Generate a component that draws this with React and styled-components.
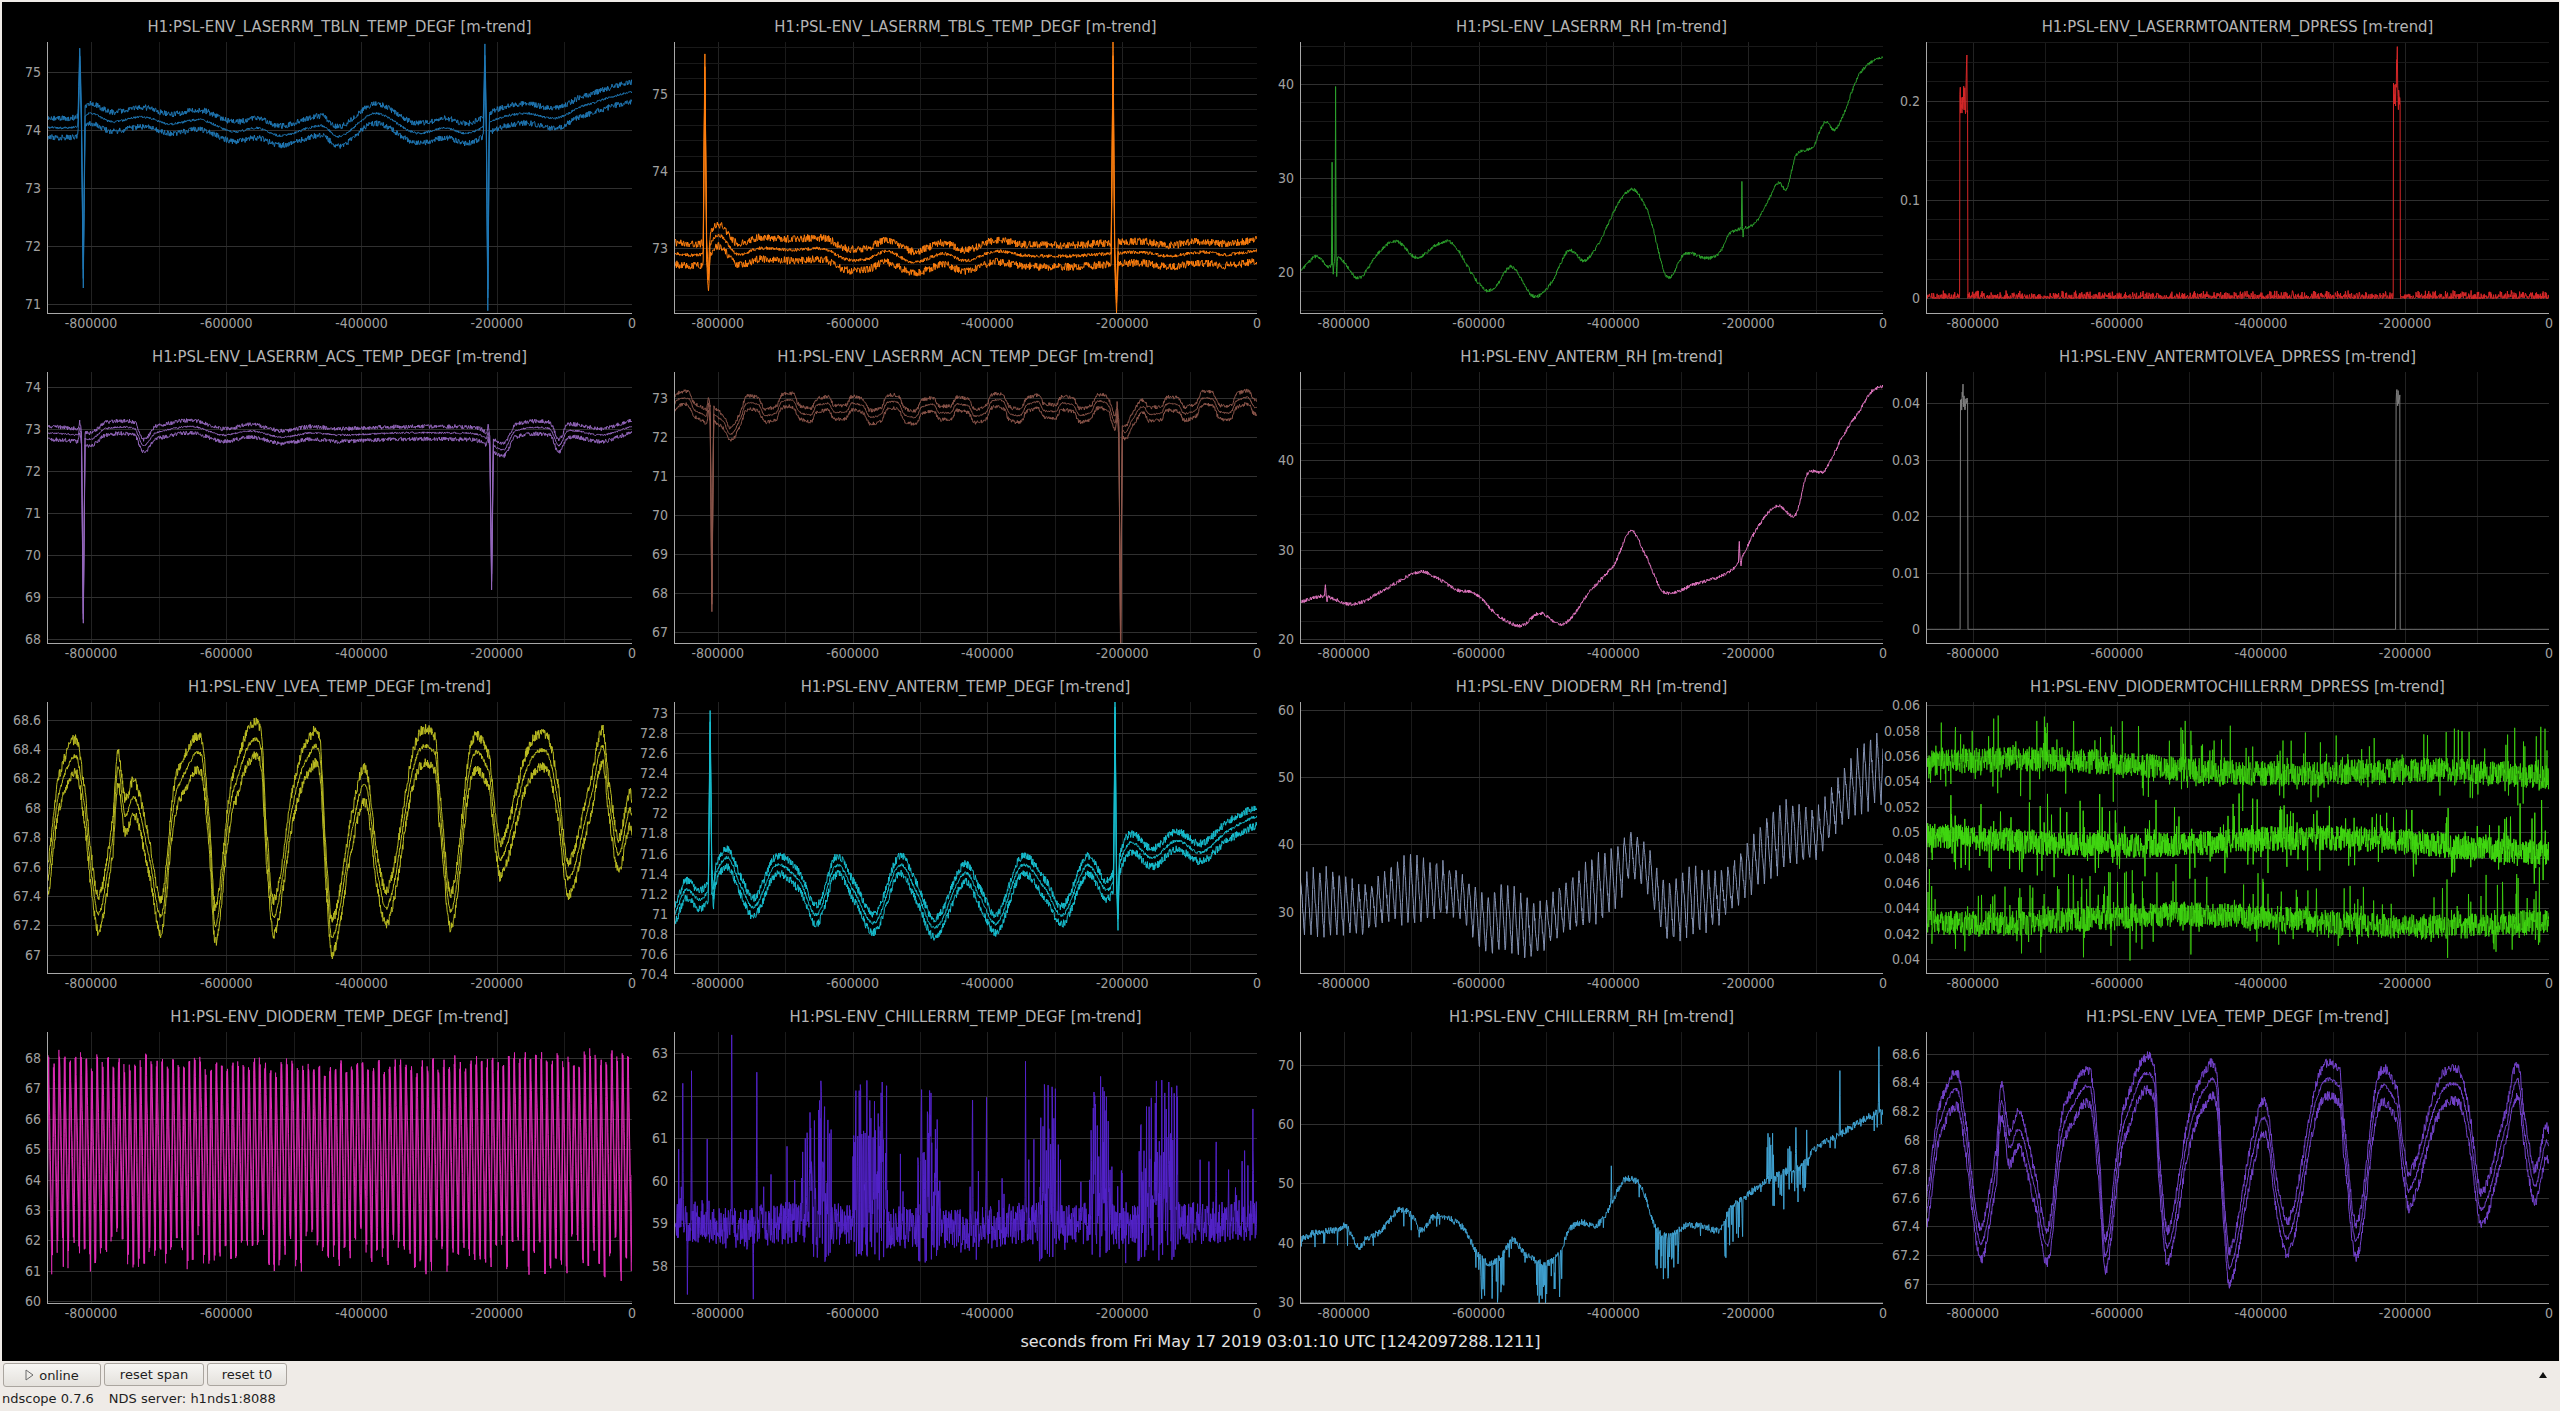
import React, { useMemo } from 'react'
import styled, { createGlobalStyle } from 'styled-components'

const GlobalStyle = createGlobalStyle`
  html, body { margin: 0; padding: 0; background: #efebe7; overflow: hidden; }
  body { font-family: "DejaVu Sans Condensed", "DejaVu Sans", sans-serif; font-stretch: condensed; }
`

const Window = styled.div`
  width: 2560px;
  height: 1411px;
  box-sizing: border-box;
  padding: 2px 1px 0 2px;
  display: flex;
  flex-direction: column;
  background: #efebe7;
`
const Scope = styled.div`
  height: 1359px;
  background: #000;
  display: flex;
  flex-direction: column;
`
const PlotGrid = styled.div`
  display: grid;
  grid-template-columns: 640px 625px 626px 666px;
  grid-template-rows: repeat(4, 330px);
`
const Cell = styled.div`
  display: grid;
  grid-template-columns: ${p => p.$axis}px ${p => p.$plot}px;
  grid-template-rows: 40px 272px 18px;
`
const Title = styled.div`
  grid-column: 2;
  grid-row: 1;
  align-self: end;
  padding-bottom: 5px;
  text-align: center;
  white-space: nowrap;
  color: #b4b4b4;
  font-size: 16.5px;
  line-height: 20px;
`
const YAxis = styled.div`
  grid-column: 1;
  grid-row: 2;
  position: relative;
`
const YLabel = styled.span`
  position: absolute;
  right: 6px;
  transform: translateY(-50%);
  color: #a0a0a0;
  font-size: 14px;
  line-height: 16px;
  white-space: nowrap;
`
const PlotArea = styled.svg`
  grid-column: 2;
  grid-row: 2;
  display: block;
  overflow: hidden;
`
const XAxis = styled.div`
  grid-column: 2;
  grid-row: 3;
  position: relative;
`
const XLabel = styled.span`
  position: absolute;
  top: 0;
  transform: translateX(-50%);
  color: #a0a0a0;
  font-size: 14px;
  line-height: 18px;
  white-space: nowrap;
`
const TimeLabel = styled.div`
  height: 39px;
  display: flex;
  align-items: center;
  justify-content: center;
  color: #e2e2e2;
  font-family: "DejaVu Sans", sans-serif;
  font-stretch: normal;
  font-size: 16px;
`
const Panel = styled.div`
  flex: 1;
  display: flex;
  flex-direction: column;
  padding-top: 2px;
  font-family: "DejaVu Sans", sans-serif;
  font-stretch: normal;
`
const ButtonRow = styled.div`
  height: 24px;
  display: flex;
  align-items: stretch;
  gap: 3px;
  padding-left: 1px;
`
const Button = styled.button`
  width: ${p => p.$w}px;
  height: ${p => (p.$tall ? 24 : 23)}px;
  box-sizing: border-box;
  display: flex;
  align-items: center;
  justify-content: center;
  gap: 5px;
  padding: 0;
  border: 1px solid #aaa59f;
  border-radius: 3px;
  background: linear-gradient(#f7f6f4, #e4e1dc);
  color: #1e1e1e;
  font-family: inherit;
  font-size: 13px;
`
const Collapse = styled.div`
  margin-left: auto;
  margin-right: 12px;
  display: flex;
  align-items: center;
`
const Status = styled.div`
  display: flex;
  gap: 15px;
  color: #1e1e1e;
  font-size: 13px;
  line-height: 24px;
`

// ---- data helpers ----
const rng = seed => {
  let a = seed >>> 0
  return () => {
    a = (a + 0x6d2b79f5) >>> 0
    let t = a
    t = Math.imul(t ^ (t >>> 15), t | 1)
    t ^= t + Math.imul(t ^ (t >>> 7), t | 61)
    return ((t ^ (t >>> 14)) >>> 0) / 4294967296
  }
}

const curve = (keys, t) => {
  const n = keys.length
  if (t <= keys[0][0]) return keys[0][1]
  if (t >= keys[n - 1][0]) return keys[n - 1][1]
  let i = 1
  while (keys[i][0] < t) i++
  const p0 = keys[Math.max(0, i - 2)][1]
  const p1 = keys[i - 1][1]
  const p2 = keys[i][1]
  const p3 = keys[Math.min(n - 1, i + 1)][1]
  const u = (t - keys[i - 1][0]) / (keys[i][0] - keys[i - 1][0])
  return 0.5 * (2 * p1 + (-p0 + p2) * u + (2 * p0 - 5 * p1 + 4 * p2 - p3) * u * u + (-p0 + 3 * p1 - 3 * p2 + p3) * u * u * u)
}

const grid = (n, spikes = []) => {
  const ts = []
  for (let i = 0; i < n; i++) ts.push(i / (n - 1))
  spikes.forEach(s => {
    const w = s.w || 0.004
    ts.push(s.t - w / 2, s.t, s.t + w / 2)
  })
  return ts.sort((a, b) => a - b)
}

const spikeAt = (list = [], t) => {
  let s = 0
  list.forEach(k => {
    const w = k.w || 0.004
    const d = t - k.t
    if (d <= 0 && d > -w) s += (k.up || 0) * Math.max(0, 1 - Math.abs(d + w / 2) / (w / 2))
    if (d > 0 && d < w) s += (k.down || 0) * Math.max(0, 1 - Math.abs(d - w / 2) / (w / 2))
  })
  return s
}

const band = o => r => {
  const ts = grid(o.n || 1200, o.spikes)
  const lo = [], mid = [], hi = []
  ts.forEach(t => {
    const b = curve(o.keys, t) + (o.wave ? o.wave(t) : 0) + spikeAt(o.spikes, t)
    mid.push(b + (r() - 0.5) * 2 * o.meanNoise)
    lo.push(b - o.spread + (r() - 0.5) * 2 * o.noise)
    hi.push(b + o.spread + (r() - 0.5) * 2 * o.noise)
  })
  return [{ ts, vs: lo }, { ts, vs: mid }, { ts, vs: hi }]
}

const single = o => r => {
  const ts = grid(o.n || 1200, o.spikes)
  const vs = ts.map(t => curve(o.keys, t) + spikeAt(o.spikes, t) + (r() - 0.5) * 2 * (o.noise || 0) + (o.extra ? o.extra(t, r) : 0))
  return [{ ts, vs }]
}

const inside = (t, list) => list.findIndex(([a, b]) => t >= a && t <= b)

const LVEA = [[0, 67.48], [0.019, 68.08], [0.05, 68.35], [0.065, 67.99], [0.075, 67.58], [0.089, 67.28], [0.113, 67.81], [0.121, 68.27], [0.133, 67.95], [0.15, 68.07], [0.175, 67.66], [0.196, 67.27], [0.216, 67.99], [0.23, 68.2], [0.264, 68.36], [0.278, 67.8], [0.288, 67.2], [0.312, 67.97], [0.326, 68.21], [0.347, 68.44], [0.367, 68.39], [0.374, 67.8], [0.388, 67.26], [0.422, 68.05], [0.45, 68.37], [0.467, 68.34], [0.477, 67.58], [0.488, 67.12], [0.525, 67.91], [0.546, 68.14], [0.564, 67.58], [0.584, 67.35], [0.629, 68.31], [0.664, 68.37], [0.67, 68.03], [0.691, 67.3], [0.725, 68.31], [0.756, 68.24], [0.767, 67.83], [0.777, 67.66], [0.822, 68.28], [0.856, 68.37], [0.874, 68.03], [0.891, 67.52], [0.932, 68.1], [0.95, 68.42], [0.96, 68.07], [0.977, 67.68], [0.995, 67.98], [1, 67.95]]

const lveaBand = band({ keys: LVEA, spread: 0.115, noise: 0.035, meanNoise: 0.014, n: 1500 })

const PLOTS = [
  {
    title: 'H1:PSL-ENV_LASERRM_TBLN_TEMP_DEGF [m-trend]', color: '#1f77b4', y: [70.83, 75.51], major: 1,
    gen: band({
      keys: [[0, 74.04], [0.05, 74.05], [0.072, 74.28], [0.11, 74.14], [0.164, 74.22], [0.21, 74.1], [0.263, 74.17], [0.317, 73.97], [0.36, 74.03], [0.4, 73.9], [0.469, 74.07], [0.5, 73.89], [0.561, 74.28], [0.629, 73.95], [0.683, 74.03], [0.72, 73.94], [0.774, 74.2], [0.82, 74.28], [0.87, 74.2], [0.912, 74.4], [1, 74.65]],
      spread: 0.167, noise: 0.05, meanNoise: 0.02,
      spikes: [{ t: 0.059, up: 1.15, down: -2.75, w: 0.006 }, { t: 0.751, up: 1.2, down: -3.0, w: 0.005 }],
    }),
  },
  {
    title: 'H1:PSL-ENV_LASERRM_TBLS_TEMP_DEGF [m-trend]', color: '#ff7f0e', y: [72.15, 75.67], major: 1, minor: 0.2,
    gen: band({
      keys: [[0, 72.93], [0.05, 72.93], [0.076, 73.17], [0.107, 72.93], [0.147, 73.0], [0.2, 72.98], [0.26, 72.99], [0.294, 72.86], [0.33, 72.86], [0.365, 72.96], [0.411, 72.82], [0.462, 72.93], [0.5, 72.84], [0.55, 72.96], [0.6, 72.91], [0.68, 72.9], [0.745, 72.93], [0.8, 72.95], [0.85, 72.9], [0.9, 72.95], [0.95, 72.92], [1, 72.97]],
      spread: 0.14, noise: 0.05, meanNoise: 0.022,
      spikes: [{ t: 0.056, up: 2.4, down: -0.45, w: 0.006 }, { t: 0.756, up: 2.55, down: -0.65, w: 0.006 }],
    }),
  },
  {
    title: 'H1:PSL-ENV_LASERRM_RH [m-trend]', color: '#2ca02c', y: [15.6, 44.4], major: 10, minor: 2,
    gen: single({
      keys: [[0, 20.2], [0.028, 21.7], [0.05, 20.6], [0.068, 21.5], [0.1, 19.4], [0.137, 22.2], [0.165, 23.3], [0.2, 21.6], [0.24, 23.1], [0.263, 22.9], [0.309, 18.7], [0.332, 18.3], [0.363, 20.6], [0.4, 17.5], [0.431, 18.9], [0.46, 22.3], [0.494, 21.5], [0.563, 28.6], [0.597, 26.4], [0.629, 19.6], [0.66, 22.0], [0.697, 21.5], [0.72, 22.1], [0.737, 24.1], [0.754, 24.6], [0.78, 25.2], [0.8, 27.2], [0.82, 29.5], [0.835, 28.9], [0.85, 32.4], [0.88, 33.3], [0.9, 35.9], [0.92, 35.3], [0.96, 41], [1, 42.8]],
      noise: 0.18, n: 1300,
      spikes: [{ t: 0.056, up: 11, down: -1, w: 0.002 }, { t: 0.062, up: 18.5, down: -2, w: 0.002 }, { t: 0.759, up: 5, down: -0.8, w: 0.002 }],
    }),
  },
  {
    title: 'H1:PSL-ENV_LASERRMTOANTERM_DPRESS [m-trend]', color: '#d62728', y: [-0.016, 0.26], major: 0.1, minor: 0.02,
    gen: single({
      keys: [[0, 0.001], [1, 0.001]], n: 1800,
      extra: (t, r) => {
        const w = inside(t, [[0.054, 0.067], [0.75, 0.761]])
        if (w === 0) return 0.2 + (r() - 0.5) * 0.03 + (t > 0.064 && t < 0.066 ? 0.035 : 0)
        if (w === 1) return 0.205 + (r() - 0.5) * 0.03 + (t > 0.755 && t < 0.757 ? 0.035 : 0)
        return r() * r() * 0.009 - 0.0015
      },
    }),
  },
  {
    title: 'H1:PSL-ENV_LASERRM_ACS_TEMP_DEGF [m-trend]', color: '#9467bd', y: [67.88, 74.35], major: 1,
    gen: band({
      keys: [[0, 72.9], [0.05, 72.85], [0.075, 72.75], [0.1, 73.0], [0.15, 73.0], [0.165, 72.6], [0.185, 72.9], [0.25, 73.05], [0.3, 72.85], [0.35, 72.95], [0.4, 72.8], [0.45, 72.9], [0.5, 72.85], [0.6, 72.9], [0.7, 72.9], [0.74, 72.85], [0.78, 72.5], [0.8, 72.95], [0.86, 73.0], [0.875, 72.6], [0.89, 72.95], [0.95, 72.85], [1, 73.05]],
      spread: 0.15, noise: 0.05, meanNoise: 0.022,
      spikes: [{ t: 0.059, up: 0.2, down: -4.3, w: 0.006 }, { t: 0.757, up: 0.2, down: -3.3, w: 0.006 }],
    }),
  },
  {
    title: 'H1:PSL-ENV_LASERRM_ACN_TEMP_DEGF [m-trend]', color: '#8c564b', y: [66.7, 73.67], major: 1,
    gen: band({
      keys: [[0, 72.8], [0.05, 72.75], [0.08, 72.35], [0.1, 72.2], [0.12, 72.7], [0.2, 72.75], [0.4, 72.7], [0.6, 72.75], [0.74, 72.7], [0.78, 72.3], [0.8, 72.6], [0.85, 72.75], [1, 72.85]],
      wave: t => 0.15 * Math.tanh(2.5 * Math.sin((2 * Math.PI * t) / 0.06)) + 0.06 * Math.sin(t * 71),
      spread: 0.17, noise: 0.05, meanNoise: 0.022,
      spikes: [{ t: 0.062, up: 0.3, down: -4.9, w: 0.006 }, { t: 0.763, up: 0.4, down: -5.6, w: 0.006 }],
    }),
  },
  {
    title: 'H1:PSL-ENV_ANTERM_RH [m-trend]', color: '#e377c2', y: [19.45, 49.9], major: 10, minor: 2,
    gen: single({
      keys: [[0, 24.2], [0.04, 24.8], [0.093, 23.9], [0.149, 25.7], [0.204, 27.5], [0.23, 27], [0.27, 25.5], [0.3, 25.1], [0.34, 22.6], [0.38, 21.5], [0.41, 22.9], [0.453, 21.7], [0.497, 25.3], [0.54, 28.4], [0.567, 32.1], [0.59, 29.7], [0.623, 25.3], [0.68, 26.2], [0.72, 27], [0.75, 28.4], [0.79, 33], [0.82, 34.9], [0.85, 33.9], [0.87, 38.5], [0.9, 38.9], [0.93, 42.6], [0.96, 45.5], [0.98, 47.7], [1, 48.3]],
      noise: 0.2, n: 1300,
      spikes: [{ t: 0.045, up: 1.5, down: -0.5, w: 0.003 }, { t: 0.755, up: 2.2, down: -0.8, w: 0.003 }],
    }),
  },
  {
    title: 'H1:PSL-ENV_ANTERMTOLVEA_DPRESS [m-trend]', color: '#7f7f7f', y: [-0.0026, 0.0455], major: 0.01,
    gen: single({
      keys: [[0, 0], [1, 0]], n: 1500,
      extra: (t, r) => {
        const w = inside(t, [[0.055, 0.067], [0.754, 0.761]])
        if (w === 0) return 0.04 + (r() - 0.5) * 0.003 + (t > 0.058 && t < 0.06 ? 0.0025 : 0)
        if (w === 1) return 0.041 + (r() - 0.5) * 0.003
        return 0
      },
    }),
  },
  { title: 'H1:PSL-ENV_LVEA_TEMP_DEGF [m-trend]', color: '#bcbd22', y: [66.87, 68.72], major: 0.2, gen: lveaBand },
  {
    title: 'H1:PSL-ENV_ANTERM_TEMP_DEGF [m-trend]', color: '#17becf', y: [70.4, 73.11], major: 0.2,
    gen: band({
      keys: [[0, 70.99], [0.02, 71.24], [0.048, 71.15], [0.09, 71.56], [0.118, 71.24], [0.138, 71.07], [0.174, 71.48], [0.216, 71.32], [0.245, 70.99], [0.278, 71.48], [0.307, 71.24], [0.344, 70.91], [0.386, 71.48], [0.414, 71.24], [0.448, 70.86], [0.498, 71.4], [0.526, 71.15], [0.554, 70.91], [0.596, 71.48], [0.638, 71.24], [0.667, 70.99], [0.708, 71.48], [0.745, 71.24], [0.78, 71.7], [0.82, 71.56], [0.862, 71.73], [0.904, 71.61], [0.946, 71.81], [1, 71.97]],
      spread: 0.09, noise: 0.04, meanNoise: 0.016, n: 1400,
      spikes: [{ t: 0.065, up: 1.65, down: -0.2, w: 0.006 }, { t: 0.759, up: 1.7, down: -0.5, w: 0.005 }],
    }),
  },
  {
    title: 'H1:PSL-ENV_DIODERM_RH [m-trend]', color: '#8593b3', y: [20.7, 61.2], major: 10,
    gen: single({
      keys: [[0, 31.2], [0.07, 31.2], [0.105, 30.2], [0.157, 32.7], [0.209, 33.2], [0.268, 32.7], [0.32, 28.2], [0.35, 29.2], [0.402, 27.2], [0.44, 29.7], [0.485, 32.2], [0.544, 35.2], [0.566, 38.2], [0.596, 36.2], [0.626, 30.2], [0.67, 31.7], [0.722, 32.2], [0.767, 36.2], [0.811, 40.1], [0.84, 41.6], [0.885, 41.6], [0.915, 45.1], [0.959, 49.6], [1, 51.3]],
      n: 1800,
      extra: (t, r) => {
        const a = (t * 90 + 0.3) % 1
        const s = a < 0.35 ? -1 + (2 * a) / 0.35 : 1 - (2 * (a - 0.35)) / 0.65
        return (4.3 + 0.8 * Math.sin(t * 40)) * s + (r() - 0.5) * 1.2
      },
    }),
  },
  {
    title: 'H1:PSL-ENV_DIODERMTOCHILLERRM_DPRESS [m-trend]', color: '#40d810', y: [0.03884, 0.06026], major: 0.002,
    gen: r => [[0.0554, -0.0013], [0.0494, -0.0006], [0.0432, -0.0004]].map(([c, d], j) => {
      const ts = grid(2200)
      const vs = ts.map(t => {
        let v = c + d * t * t + 0.0004 * Math.sin(t * 9 + j * 2) + (r() - 0.5) * 0.002
        if (r() < 0.1) v += (r() - 0.42) * 0.006
        return v
      })
      return { ts, vs, opacity: j === 1 ? 1 : 0.8 }
    }),
  },
  {
    title: 'H1:PSL-ENV_DIODERM_TEMP_DEGF [m-trend]', color: '#e22cb8', y: [59.9, 68.86], major: 1,
    gen: r => {
      const cycles = 108
      const lo = [], hi = []
      for (let k = 0; k <= cycles; k++) {
        lo.push(60.7 + r() * 1.5)
        hi.push(67.8 + r() * 0.45)
      }
      return [0, 0.12].map(shift => {
        const ts = grid(cycles * 16)
        const vs = ts.map(t => {
          const c = t * cycles + shift
          const k = Math.min(cycles, Math.floor(c))
          const a = c - Math.floor(c)
          const s = a < 0.3 ? a / 0.3 : 1 - (a - 0.3) / 0.7
          return lo[k] + (hi[k] - lo[k]) * s + (r() - 0.5) * 0.3
        })
        return { ts, vs, opacity: shift ? 0.75 : 1 }
      })
    },
  },
  {
    title: 'H1:PSL-ENV_CHILLERRM_TEMP_DEGF [m-trend]', color: '#5222c8', y: [57.1, 63.5], major: 1,
    gen: single({
      keys: [[0, 59.1], [0.1, 58.9], [0.2, 59.0], [0.5, 58.85], [0.6, 59.0], [0.9, 59.0], [1, 59.1]],
      n: 1600,
      spikes: [{ t: 0.016, up: 3, w: 0.002 }, { t: 0.031, up: 3.2, w: 0.002 }, { t: 0.1, up: 2.8, w: 0.002 }, { t: 0.143, up: 3.4, w: 0.002 }, { t: 0.513, up: 3.4, w: 0.002 }, { t: 0.537, up: 2.9, w: 0.002 }, { t: 0.604, up: 3.4, w: 0.002 }, { t: 0.931, up: 1.6, w: 0.002 }, { t: 0.994, up: 2.2, w: 0.002 }, { t: 0.022, down: -1.5, w: 0.002 }, { t: 0.135, down: -1.3, w: 0.002 }],
      extra: (t, r) => {
        const b = inside(t, [[0.225, 0.27], [0.306, 0.366], [0.418, 0.455], [0.626, 0.656], [0.715, 0.749], [0.797, 0.864]])
        if (b >= 0) return r() < 0.5 ? 0.2 + r() * 3.3 : (r() - 0.5) * 1.8
        return (r() - 0.5) * 1.0 + (r() < 0.06 ? (r() - 0.3) * 2.4 : 0)
      },
    }),
  },
  {
    title: 'H1:PSL-ENV_CHILLERRM_RH [m-trend]', color: '#40a2d2', y: [29.7, 75.5], major: 10,
    gen: single({
      keys: [[0, 40.5], [0.022, 41.6], [0.067, 42.2], [0.078, 42.8], [0.1, 39.4], [0.111, 40.5], [0.141, 42.2], [0.171, 45.6], [0.193, 44.5], [0.208, 42.2], [0.23, 44.5], [0.26, 43.9], [0.282, 42.2], [0.305, 38.2], [0.327, 36.5], [0.349, 38.2], [0.364, 40.5], [0.386, 38.2], [0.409, 36.8], [0.423, 36.5], [0.446, 38.2], [0.461, 42.2], [0.483, 43.4], [0.505, 42.8], [0.527, 45.1], [0.55, 49.7], [0.565, 50.8], [0.587, 49.1], [0.609, 42.8], [0.632, 41.1], [0.661, 42.8], [0.691, 42.8], [0.721, 42.2], [0.736, 45.6], [0.766, 47.9], [0.795, 50.2], [0.825, 51.9], [0.854, 52.5], [0.884, 55.9], [0.914, 57.6], [0.944, 59.4], [0.973, 61.1], [1, 62.2]],
      noise: 0.6, n: 1400,
      spikes: [{ t: 0.927, up: 11, w: 0.002 }, { t: 0.994, up: 11, w: 0.002 }, { t: 0.535, up: 6, w: 0.002 }],
      extra: (t, r) => {
        const w = inside(t, [[0.3, 0.35], [0.4, 0.45], [0.61, 0.65], [0.725, 0.76], [0.8, 0.87]])
        if (w < 0) return r() < 0.03 ? -r() * 3 : 0
        if (r() < 0.3) return w === 4 ? (r() < 0.5 ? r() * 8 : -r() * 6) : -2 - r() * 5
        return 0
      },
    }),
  },
  { title: 'H1:PSL-ENV_LVEA_TEMP_DEGF [m-trend]', color: '#7443cc', y: [66.86, 68.75], major: 0.2, gen: lveaBand },
]

const COLS = [
  { axis: 45, plot: 585 },
  { axis: 32, plot: 583 },
  { axis: 33, plot: 583 },
  { axis: 33, plot: 623 },
]

const X_MIN = -865000
const X_MAJOR = [-800000, -600000, -400000, -200000, 0]
const X_MINOR = [-700000, -500000, -300000, -100000]
const H = 272

const ticksIn = (lo, hi, step) => {
  const out = []
  for (let k = Math.ceil(lo / step - 1e-9); k * step <= hi + 1e-12; k++) out.push(+(k * step).toFixed(6))
  return out
}

const crisp = v => Math.round(v) + 0.5

function Chart({ cfg, col, seed }) {
  const W = col.plot
  const series = useMemo(() => cfg.gen(rng(seed)), [cfg, seed])
  const [y0, y1] = cfg.y
  const sy = v => ((y1 - v) / (y1 - y0)) * H
  const sx = v => ((v - X_MIN) / -X_MIN) * W
  const major = ticksIn(y0, y1, cfg.major)
  const minor = cfg.minor ? ticksIn(y0, y1, cfg.minor).filter(v => !major.some(m => Math.abs(m - v) < 1e-9)) : []

  return (
    <Cell $axis={col.axis} $plot={W}>
      <Title>{cfg.title}</Title>
      <YAxis>
        {major.map(v => (
          <YLabel key={v} style={{ top: sy(v) }}>{String(v)}</YLabel>
        ))}
      </YAxis>
      <PlotArea width={W} height={H} viewBox={`0 0 ${W} ${H}`}>
        <g shapeRendering="crispEdges" strokeWidth="1">
          {X_MINOR.map(v => <line key={v} x1={crisp(sx(v))} x2={crisp(sx(v))} y1="0" y2={H} stroke="#1a1a1a" />)}
          {X_MAJOR.map(v => <line key={v} x1={crisp(sx(v))} x2={crisp(sx(v))} y1="0" y2={H} stroke="#222" />)}
          {minor.map(v => <line key={v} x1="0" x2={W} y1={crisp(sy(v))} y2={crisp(sy(v))} stroke="#191919" />)}
          {major.map(v => <line key={v} x1="0" x2={W} y1={crisp(sy(v))} y2={crisp(sy(v))} stroke="#303030" />)}
        </g>
        {series.map((s, i) => (
          <polyline
            key={i}
            fill="none"
            stroke={cfg.color}
            strokeOpacity={s.opacity ?? 1}
            strokeWidth="1"
            strokeLinejoin="round"
            points={s.ts.map((t, j) => `${(t * W).toFixed(1)},${sy(s.vs[j]).toFixed(1)}`).join(' ')}
          />
        ))}
        <g shapeRendering="crispEdges" stroke="#a8a8a8" strokeWidth="1">
          <line x1="0.5" x2="0.5" y1="0" y2={H} />
          <line x1="0" x2={W} y1={H - 0.5} y2={H - 0.5} />
        </g>
      </PlotArea>
      <XAxis>
        {X_MAJOR.map(v => (
          <XLabel key={v} style={{ left: sx(v) }}>{v}</XLabel>
        ))}
      </XAxis>
    </Cell>
  )
}

export default function App() {
  return (
    <>
      <GlobalStyle />
      <Window>
        <Scope>
          <PlotGrid>
            {PLOTS.map((cfg, i) => (
              <Chart key={i} cfg={cfg} col={COLS[i % 4]} seed={1000 + i * 77} />
            ))}
          </PlotGrid>
          <TimeLabel>seconds from Fri May 17 2019 03:01:10 UTC [1242097288.1211]</TimeLabel>
        </Scope>
        <Panel>
          <ButtonRow>
            <Button $w={98} $tall>
              <svg width="9" height="12" viewBox="0 0 9 12">
                <polygon points="1,1 8,6 1,11" fill="none" stroke="#6a6a6a" strokeWidth="1" />
              </svg>
              online
            </Button>
            <Button $w={100}>reset span</Button>
            <Button $w={80}>reset t0</Button>
            <Collapse>
              <svg width="8" height="6" viewBox="0 0 8 6">
                <polygon points="0,6 4,0 8,6" fill="#111" />
              </svg>
            </Collapse>
          </ButtonRow>
          <Status>
            <span>ndscope 0.7.6</span>
            <span>NDS server: h1nds1:8088</span>
          </Status>
        </Panel>
      </Window>
    </>
  )
}
